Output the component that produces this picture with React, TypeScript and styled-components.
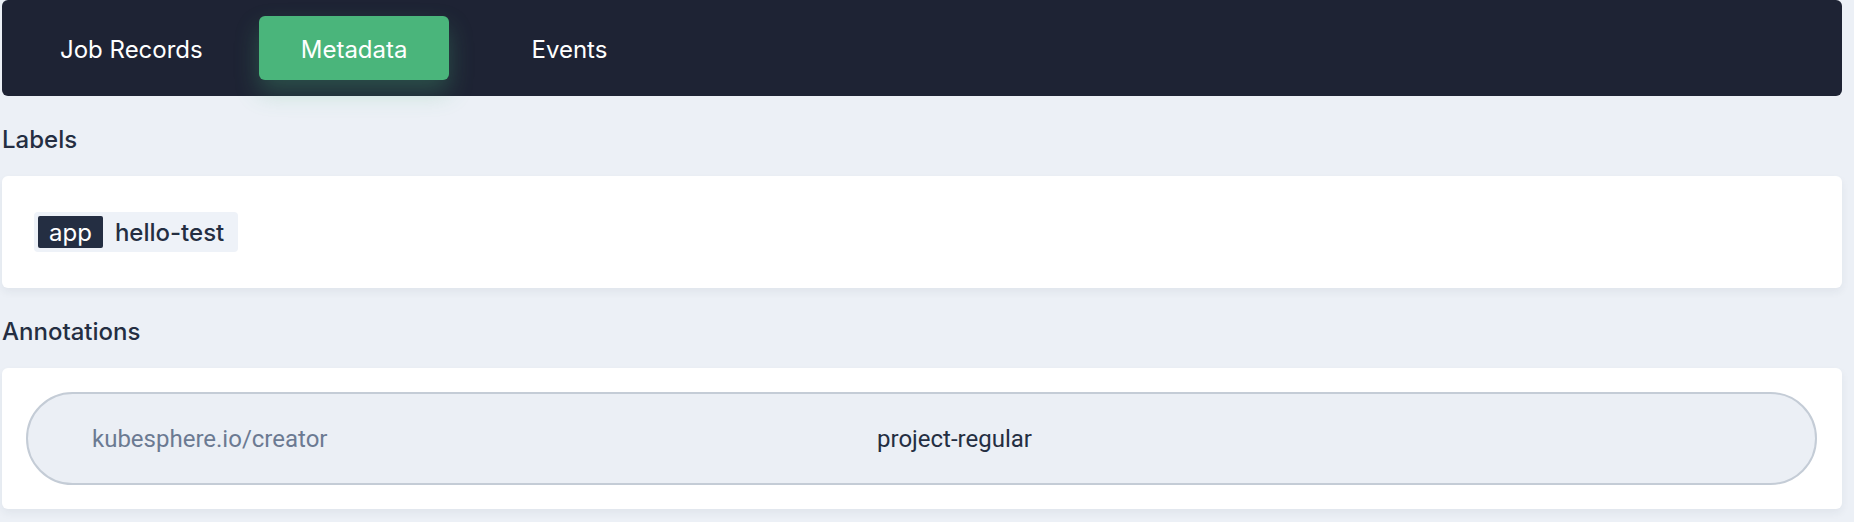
import React from "react";
import styled, { createGlobalStyle } from "styled-components";

const GlobalStyle = createGlobalStyle`
  html, body {
    margin: 0;
    padding: 0;
    background: #ecf0f6;
  }
  body {
    font-family: Inter, "Noto Sans", sans-serif;
    color: #242e42;
  }
  * { box-sizing: border-box; }
`;

const Page = styled.div`
  padding: 0 12px 14px 2px;
  display: flex;
  flex-direction: column;
`;

const TabBar = styled.nav`
  height: 96px;
  background: #1e2334;
  border-radius: 6px;
  display: flex;
  align-items: center;
  padding-left: 16px;
  gap: 14px;
`;

const Tab = styled.div<{ $active?: boolean; $offset?: number }>`
  height: 64px;
  padding: 2px 42px 0;
  margin-left: ${(p) => p.$offset ?? 0}px;
  display: flex;
  align-items: center;
  border-radius: 6px;
  font-family: Inter, "Noto Sans", sans-serif;
  font-size: 24px;
  color: #ffffff;
  background: ${(p) => (p.$active ? "#4ab57b" : "transparent")};
  box-shadow: ${(p) =>
    p.$active ? "0 12px 24px 0 rgba(74, 181, 123, 0.3)" : "none"};
`;

const SectionTitle = styled.h3`
  margin: 28px 0 20px;
  height: 32px;
  line-height: 32px;
  font-family: Inter, "Noto Sans", sans-serif;
  font-size: 24px;
  font-weight: 500;
  color: #242e42;
`;

const Card = styled.div<{ $pad: string }>`
  background: #ffffff;
  border-radius: 6px;
  padding: ${(p) => p.$pad};
  box-shadow: 0 4px 8px 0 rgba(36, 46, 66, 0.06);
`;

const LabelTag = styled.div`
  display: inline-flex;
  align-items: center;
  height: 40px;
  padding: 4px 14px 4px 4px;
  gap: 12px;
  border-radius: 4px;
  background: #eef2f8;
  font-family: Inter, "Noto Sans", sans-serif;
  font-size: 24px;
  font-weight: 500;
`;

const LabelKey = styled.span`
  height: 32px;
  padding: 0 11px;
  display: flex;
  align-items: center;
  border-radius: 2px;
  background: #242e42;
  color: #ffffff;
  font-weight: 400;
`;

const LabelValue = styled.span`
  color: #242e42;
`;

const AnnotationRow = styled.div`
  height: 93px;
  border: 2px solid #c4ccd6;
  border-radius: 47px;
  background: #ebeff5;
  display: grid;
  grid-template-columns: 785px 1fr;
  align-items: center;
  padding-left: 64px;
  font-family: Roboto, "Noto Sans", sans-serif;
  font-size: 24px;
`;

const AnnoKey = styled.span`
  color: #6b7a92;
`;

const AnnoValue = styled.span`
  color: #242e42;
`;

export default function App() {
  return (
    <>
      <GlobalStyle />
      <Page>
        <TabBar>
          <Tab>Job Records</Tab>
          <Tab $active>Metadata</Tab>
          <Tab $offset={26}>Events</Tab>
        </TabBar>

        <SectionTitle>Labels</SectionTitle>
        <Card $pad="36px 32px">
          <LabelTag>
            <LabelKey>app</LabelKey>
            <LabelValue>hello-test</LabelValue>
          </LabelTag>
        </Card>

        <SectionTitle>Annotations</SectionTitle>
        <Card $pad="24px 25px 24px 24px">
          <AnnotationRow>
            <AnnoKey>kubesphere.io/creator</AnnoKey>
            <AnnoValue>project-regular</AnnoValue>
          </AnnotationRow>
        </Card>
      </Page>
    </>
  );
}
